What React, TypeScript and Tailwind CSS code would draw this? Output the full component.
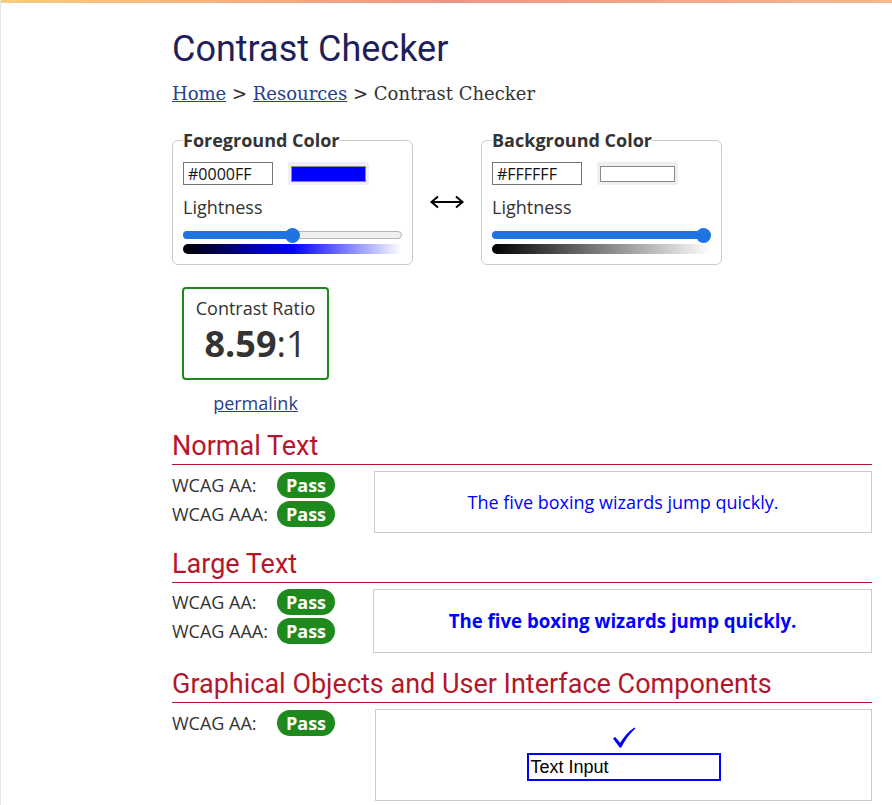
import React from "react";

const OPEN = { fontFamily: '"Open Sans", "Noto Sans", sans-serif' };
const ROBOTO = { fontFamily: 'Roboto, "Open Sans", sans-serif' };

function Swatch({ color }: { color: string }) {
  return (
    <div className="w-[81px] h-[23px] bg-[#efefef] rounded-[2px] flex items-center justify-center">
      <div className="w-[75px] h-[16px] border border-[#8a8a8a]" style={{ background: color }} />
    </div>
  );
}

function Slider({ pct }: { pct: number }) {
  return (
    <div className="relative h-[16px] mt-[8px]">
      <div className="absolute left-0 right-0 top-[4px] h-[8px] rounded-full bg-[#efefef] border border-[#b5b5b5]" />
      <div
        className="absolute left-0 top-[4px] h-[8px] rounded-full bg-[#1f74e2]"
        style={{ width: `calc(${pct / 100} * (100% - 15px) + 7.5px)` }}
      />
      <div
        className="absolute top-[0.5px] w-[15px] h-[15px] rounded-full bg-[#1f74e2]"
        style={{ left: `calc(${pct / 100} * (100% - 15px))` }}
      />
    </div>
  );
}

function ColorFieldset({
  legend,
  hex,
  color,
  pct,
  gradient,
}: {
  legend: string;
  hex: string;
  color: string;
  pct: number;
  gradient: string;
}) {
  return (
    <fieldset className="w-[240px] shrink-0 border border-[#cccccc] rounded-[6px] px-[10px] pt-[10px] pb-[10px]">
      <legend className="text-[18px] font-bold text-[#333] leading-[24px] p-0" style={OPEN}>
        {legend}
      </legend>
      <div className="flex items-center gap-[15px]">
        <div
          className="w-[90px] h-[23px] border border-[#767676] flex items-center pl-[4px] text-[16px] text-[#111]"
          style={OPEN}
        >
          {hex}
        </div>
        <Swatch color={color} />
      </div>
      <div className="mt-[10px] text-[18px] leading-[24px] text-[#333]" style={OPEN}>
        Lightness
      </div>
      <div className="w-[219px]">
        <Slider pct={pct} />
        <div className="mt-[1px] h-[10px] rounded-l-[5px]" style={{ background: gradient }} />
      </div>
    </fieldset>
  );
}

function Pass() {
  return (
    <div
      className="w-[58px] h-[26px] rounded-full bg-[#1e8a1e] text-white font-bold text-[18px] flex items-center justify-center leading-none"
      style={OPEN}
    >
      Pass
    </div>
  );
}

function Row({ label }: { label: string }) {
  return (
    <div className="flex items-center h-[26px]">
      <div className="w-[105px] text-[18px] text-[#333]" style={OPEN}>
        {label}
      </div>
      <Pass />
    </div>
  );
}

function Heading({ children }: { children: React.ReactNode }) {
  return (
    <h2
      className="mt-[15px] text-[27px] leading-[32px] text-[#b5162b] border-b border-[#b5162b] pb-[2px]"
      style={ROBOTO}
    >
      {children}
    </h2>
  );
}

export default function App() {
  return (
    <div className="w-[892px] min-h-[805px] bg-white border-l border-[#e6e6e6] overflow-hidden">
      <div className="h-[3px] w-full bg-gradient-to-r from-[#f7cd7a] via-[#ee9585] to-[#f1b98f]" />
      <div className="pl-[171px] w-[871px]">
        <h1 className="mt-[26px] text-[36px] leading-[40px] text-[#1f1f5c]" style={ROBOTO}>
          Contrast Checker
        </h1>
        <div
          className="mt-[13px] text-[18px] leading-[24px] text-[#333]"
          style={{ fontFamily: '"DejaVu Serif", "Liberation Serif", serif' }}
        >
          <a className="underline text-[#27408f]">Home</a> &gt;{" "}
          <a className="underline text-[#27408f]">Resources</a> &gt; Contrast Checker
        </div>

        <div className="mt-[22px] flex items-center">
          <ColorFieldset
            legend="Foreground Color"
            hex="#0000FF"
            color="#0000FF"
            pct={50}
            gradient="linear-gradient(to right, #000000, #0000ff 50%, #ffffff)"
          />
          <div className="w-[68px] shrink-0 flex items-center justify-center pt-[10px]">
            <svg width="36" height="14" viewBox="0 0 36 14">
              <line x1="3" y1="7" x2="33" y2="7" stroke="#000" strokeWidth="2" />
              <polyline points="9,1.5 2.5,7 9,12.5" fill="none" stroke="#000" strokeWidth="2" />
              <polyline points="27,1.5 33.5,7 27,12.5" fill="none" stroke="#000" strokeWidth="2" />
            </svg>
          </div>
          <ColorFieldset
            legend="Background Color"
            hex="#FFFFFF"
            color="#FFFFFF"
            pct={100}
            gradient="linear-gradient(to right, #000000, #ffffff)"
          />
        </div>

        <div className="ml-[10px] w-[147px] mt-[22px] flex flex-col items-center">
          <div className="w-[147px] h-[93px] border-2 border-[#1e8a1e] rounded-[4px] flex flex-col items-center pt-[7px] text-[#333]">
            <div className="text-[18px] leading-[24px]" style={OPEN}>
              Contrast Ratio
            </div>
            <div className="text-[36px] leading-[40px] mt-[4px]" style={OPEN}>
              <span className="font-bold">8.59</span>:1
            </div>
          </div>
          <a className="mt-[11px] text-[18px] leading-[24px] underline text-[#27408f]" style={OPEN}>
            permalink
          </a>
        </div>

        <Heading>Normal Text</Heading>
        <div className="flex mt-[6px]">
          <div className="w-[202px] flex flex-col gap-[3px] pt-[1px]">
            <Row label="WCAG AA:" />
            <Row label="WCAG AAA:" />
          </div>
          <div
            className="flex-1 h-[62px] border border-[#cccccc] flex items-center justify-center text-[18px] text-[#0000ff]"
            style={OPEN}
          >
            The five boxing wizards jump quickly.
          </div>
        </div>

        <Heading>Large Text</Heading>
        <div className="flex mt-[6px]">
          <div className="w-[201px] flex flex-col gap-[3px]">
            <Row label="WCAG AA:" />
            <Row label="WCAG AAA:" />
          </div>
          <div
            className="flex-1 h-[64px] border border-[#cccccc] flex items-center justify-center text-[18.67px] font-bold text-[#0000ff]"
            style={OPEN}
          >
            The five boxing wizards jump quickly.
          </div>
        </div>

        <Heading>Graphical Objects and User Interface Components</Heading>
        <div className="flex mt-[6px]">
          <div className="w-[203px] flex flex-col pt-[1px]">
            <Row label="WCAG AA:" />
          </div>
          <div className="flex-1 h-[92px] border border-[#cccccc] flex flex-col items-center pt-[17px]">
            <svg width="24" height="21" viewBox="0 0 24 21">
              <path
                d="M1 11.5 L3.2 10 L8.2 15.8 Q14 6 22.5 0.5 L23.4 1.6 Q15.5 8.5 9.3 20.5 L7.6 20.5 Z"
                fill="#0000ff"
              />
            </svg>
            <div
              className="mt-[5px] w-[194px] h-[28px] border-2 border-[#0000ff] flex items-center pl-[2px] text-[18px] text-black"
              style={{ fontFamily: '"Liberation Sans", Arial, sans-serif' }}
            >
              Text Input
            </div>
          </div>
        </div>
      </div>
    </div>
  );
}
